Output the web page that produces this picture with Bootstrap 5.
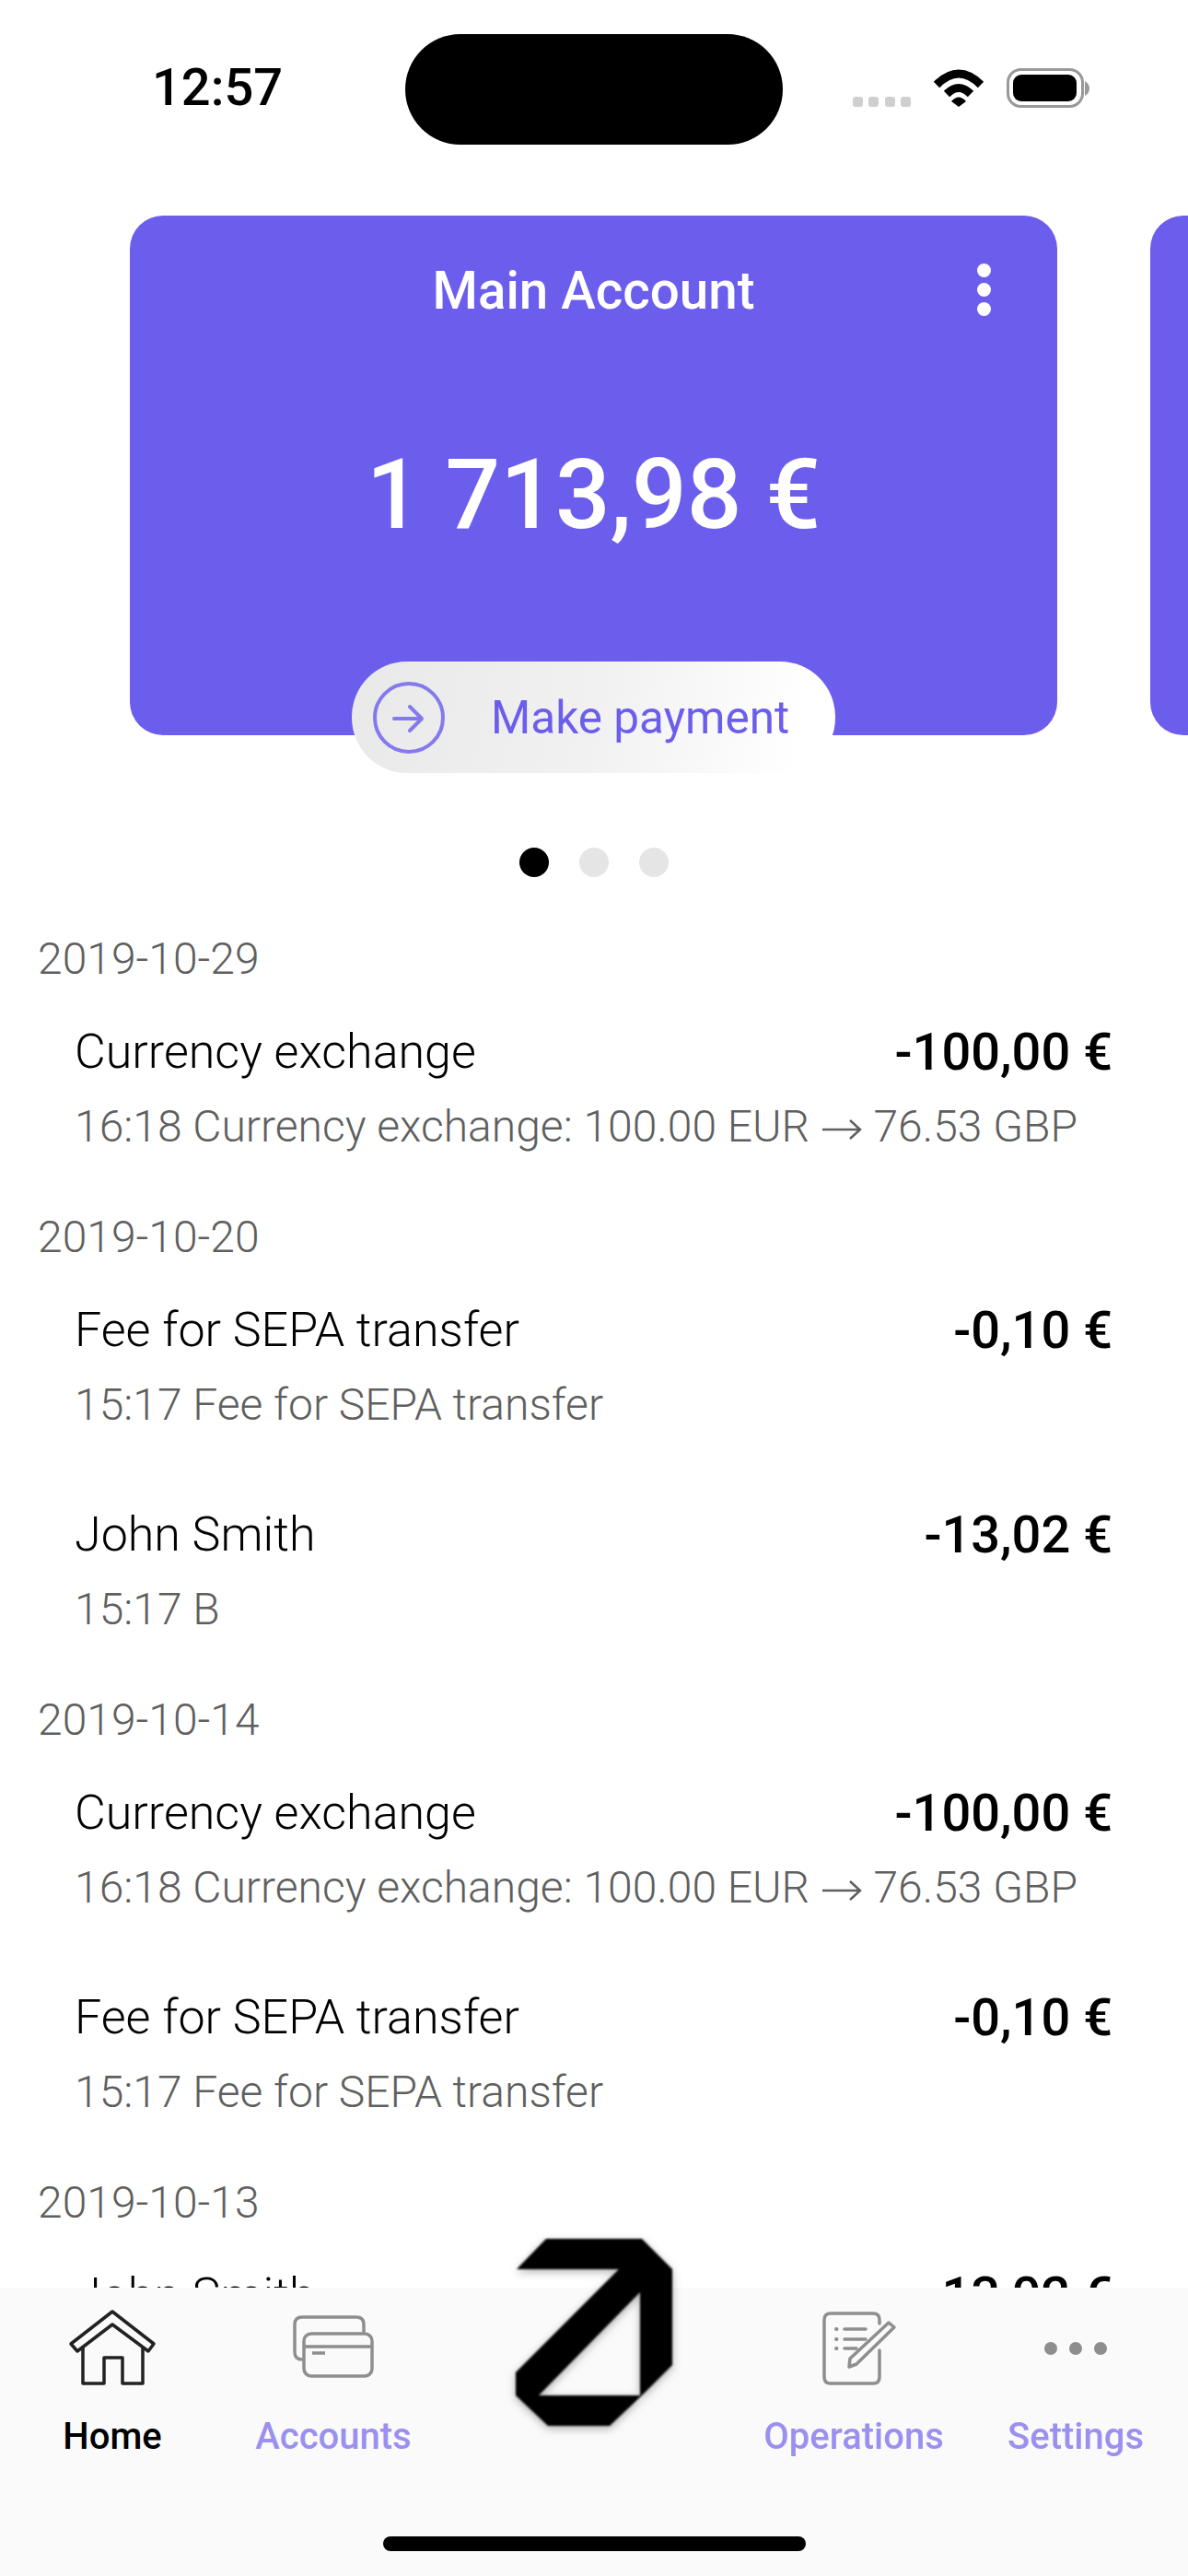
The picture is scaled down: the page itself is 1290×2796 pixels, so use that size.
<!DOCTYPE html>
<html>
<head>
<meta charset="utf-8">
<meta name="viewport" content="width=device-width, initial-scale=1">
<link href="https://cdn.jsdelivr.net/npm/bootstrap@5.3.3/dist/css/bootstrap.min.css" rel="stylesheet">
<title>Home</title>
<style>
  body{ width:1290px; height:2796px; overflow:hidden; background:#fff; font-family:Roboto,"Liberation Sans",sans-serif; color:#000; }
  .status-bar{ height:234px; }
  .clock{ left:165px; top:65px; font-size:56px; font-weight:500; line-height:60px; }
  .island{ left:440px; top:37px; width:410px; height:120px; background:#000; border-radius:60px; }
  .status-icons{ right:105px; top:72px; height:46px; }
  .carousel-strip{ padding-left:141px; gap:101px; padding-bottom:41px; }
  .acc-card{ flex:0 0 1007px; height:564px; background:#6c5eec; border-radius:36px; color:#fff; }
  .acc-title{ padding-top:50px; font-size:56.5px; font-weight:500; line-height:64px; text-align:center; }
  .acc-sum{ margin-top:127px; font-size:105px; font-weight:500; line-height:126px; text-align:center; }
  .acc-menu{ right:72px; top:52px; gap:6px; }
  .acc-menu i{ display:block; width:15px; height:15px; background:#fff; border-radius:50%; }
  .pay-pill{ left:241px; bottom:-41px; width:525px; height:121px; border-radius:60px; background:linear-gradient(100deg,#e9e9e9 0%,#f1f1f1 50%,#fff 92%); padding-left:22px; gap:49px; color:#6c5eec; font-size:49.5px; line-height:60px; }
  .pager{ margin-top:81px; gap:33px; }
  .pager i{ display:block; width:32px; height:32px; border-radius:50%; background:#e5e5e5; }
  .pager i.on{ background:#000; }
  .tx-list{ margin-top:59px; }
  .tx-date{ margin-top:20px; padding-left:41px; font-size:48px; font-weight:300; line-height:60px; color:#5f5f5f; }
  .tx-date:first-child{ margin-top:0; }
  .tx-row{ padding:41px 82px 40px 81px; }
  .tx-name{ font-size:52px; font-weight:300; line-height:60px; }
  .tx-amt{ font-size:56px; font-weight:500; line-height:60px; }
  .tx-sub{ margin-top:21px; font-size:48px; font-weight:300; line-height:60px; color:#5f5f5f; }
  .tx-arrow{ vertical-align:-1px; margin:0 1px; }
  .tab-bar{ height:313px; background:#fafafa; display:grid; grid-template-columns:244px 236px 330px 234px 248px; padding-top:22px; }
  .tab-icon{ height:90px; }
  .tab-label{ margin-top:25px; font-size:40px; font-weight:500; line-height:50px; color:#9a90f0; }
  .tab-label.on{ color:#000; }
  .home-bar{ left:416px; bottom:27px; width:459px; height:16px; background:#000; border-radius:8px; }
  .logo-mark{ left:500px; top:-103px; filter:blur(.8px) drop-shadow(0 3px 5px rgba(0,0,0,.3)); }
</style>
</head>
<body>

<div class="status-bar position-relative">
  <div class="clock position-absolute">12:57</div>
  <div class="island position-absolute"></div>
  <svg class="status-icons position-absolute" width="260" height="46" viewBox="925 72 260 46">
    <g fill="#cfcfcf">
      <rect x="926" y="105" width="11" height="11" rx="3"/>
      <rect x="943" y="105" width="11" height="11" rx="3"/>
      <rect x="961" y="105" width="11" height="11" rx="3"/>
      <rect x="978" y="105" width="11" height="11" rx="3"/>
    </g>
    <path d="M1017 92Q1041 68 1065 92M1028 102Q1041 89 1054 102" fill="none" stroke="#000" stroke-width="9"/>
    <path d="M1033 110Q1041 101 1049 110L1041 116Z" fill="#000"/>
    <rect x="1094.5" y="75.5" width="81" height="40" rx="14" fill="#fff" stroke="#999" stroke-width="3"/>
    <rect x="1100" y="81" width="69" height="29" rx="9" fill="#000"/>
    <path d="M1178 88q5 3 5 8t-5 8z" fill="#999"/>
  </svg>
</div>

<div class="carousel-strip d-flex overflow-hidden">
  <div class="acc-card position-relative">
    <div class="acc-title">Main Account</div>
    <div class="acc-menu position-absolute d-flex flex-column"><i></i><i></i><i></i></div>
    <div class="acc-sum">1 713,98 €</div>
    <div class="pay-pill position-absolute d-flex align-items-center">
      <svg width="80" height="80" viewBox="0 0 80 80" fill="none" stroke="#8579ee" stroke-width="4" stroke-linecap="round" stroke-linejoin="round">
        <circle cx="40" cy="40" r="37"/>
        <path d="M24 41H54M41 28L54 41L41 54"/>
      </svg>
      <span>Make payment</span>
    </div>
  </div>
  <div class="acc-card"></div>
</div>

<div class="pager d-flex justify-content-center">
  <i class="on"></i><i></i><i></i>
</div>

<div class="tx-list">
  <div class="tx-date">2019-10-29</div>
  <div class="tx-row">
    <div class="d-flex justify-content-between"><span class="tx-name">Currency exchange</span><span class="tx-amt">-100,00 €</span></div>
    <div class="tx-sub">16:18 Currency exchange: 100.00 EUR <svg class="tx-arrow" width="44" height="28" viewBox="0 0 44 28" fill="none" stroke="#5f5f5f" stroke-width="2.5"><path d="M1 14H42M31 4L42 14L31 24"/></svg> 76.53 GBP</div>
  </div>
  <div class="tx-date">2019-10-20</div>
  <div class="tx-row">
    <div class="d-flex justify-content-between"><span class="tx-name">Fee for SEPA transfer</span><span class="tx-amt">-0,10 €</span></div>
    <div class="tx-sub">15:17 Fee for SEPA transfer</div>
  </div>
  <div class="tx-row">
    <div class="d-flex justify-content-between"><span class="tx-name">John Smith</span><span class="tx-amt">-13,02 €</span></div>
    <div class="tx-sub">15:17 B</div>
  </div>
  <div class="tx-date">2019-10-14</div>
  <div class="tx-row">
    <div class="d-flex justify-content-between"><span class="tx-name">Currency exchange</span><span class="tx-amt">-100,00 €</span></div>
    <div class="tx-sub">16:18 Currency exchange: 100.00 EUR <svg class="tx-arrow" width="44" height="28" viewBox="0 0 44 28" fill="none" stroke="#5f5f5f" stroke-width="2.5"><path d="M1 14H42M31 4L42 14L31 24"/></svg> 76.53 GBP</div>
  </div>
  <div class="tx-row">
    <div class="d-flex justify-content-between"><span class="tx-name">Fee for SEPA transfer</span><span class="tx-amt">-0,10 €</span></div>
    <div class="tx-sub">15:17 Fee for SEPA transfer</div>
  </div>
  <div class="tx-date">2019-10-13</div>
  <div class="tx-row">
    <div class="d-flex justify-content-between"><span class="tx-name">John Smith</span><span class="tx-amt">-13,02 €</span></div>
  </div>
</div>

<nav class="tab-bar fixed-bottom">
  <div class="d-flex flex-column align-items-center">
    <svg class="tab-icon" width="100" height="90" viewBox="72 2505 100 90" fill="none" stroke="#222" stroke-width="3.5" stroke-linejoin="round">
      <path d="M122 2509L167 2544L161 2552L122 2523L84 2552L77 2544Z"/>
      <path d="M90 2548V2587H113V2559H133V2587H155V2548"/>
    </svg>
    <div class="tab-label on">Home</div>
  </div>
  <div class="d-flex flex-column align-items-center">
    <svg class="tab-icon" width="100" height="90" viewBox="312 2505 100 90" fill="none" stroke="#8e8e8e" stroke-width="3.5" stroke-linejoin="round">
      <path d="M329 2561H328Q320 2561 320 2553V2523Q320 2515 328 2515H387Q395 2515 395 2523V2532"/>
      <rect x="330" y="2533" width="74" height="46" rx="8"/>
      <path d="M330 2547H404M339 2554H353"/>
    </svg>
    <div class="tab-label">Accounts</div>
  </div>
  <div></div>
  <div class="d-flex flex-column align-items-center">
    <svg class="tab-icon" width="100" height="90" viewBox="877 2505 100 90" fill="none" stroke="#8e8e8e" stroke-width="3.5" stroke-linejoin="round" stroke-linecap="round">
      <path d="M955 2522V2518Q955 2511 948 2511H902Q895 2511 895 2518V2580Q895 2587 902 2587H948Q955 2587 955 2580V2551"/>
      <path d="M917 2528H940M917 2539H940M917 2549H930"/>
      <path d="M908 2528h.5M908 2539h.5M908 2549h.5" stroke-width="4"/>
      <path d="M922 2569L923 2560L965 2521L971 2526L930 2566Z"/>
    </svg>
    <div class="tab-label">Operations</div>
  </div>
  <div class="d-flex flex-column align-items-center">
    <svg class="tab-icon" width="100" height="90" viewBox="1119 2505 100 90" fill="#8e8e8e">
      <circle cx="1142" cy="2549" r="7"/><circle cx="1169" cy="2549" r="7"/><circle cx="1196" cy="2549" r="7"/>
    </svg>
    <div class="tab-label">Settings</div>
  </div>
  <div class="home-bar position-absolute"></div>
  <svg class="logo-mark position-absolute" width="300" height="300" viewBox="0 0 300 300">
    <path fill="#000" fill-rule="evenodd" d="M93 50H197L230 83V187L197 220L162 253H95L60 220V195L172 83H61Z M195 108L85 220H195Z"/>
  </svg>
</nav>

<script src="https://cdn.jsdelivr.net/npm/bootstrap@5.3.3/dist/js/bootstrap.bundle.min.js"></script>
</body>
</html>
